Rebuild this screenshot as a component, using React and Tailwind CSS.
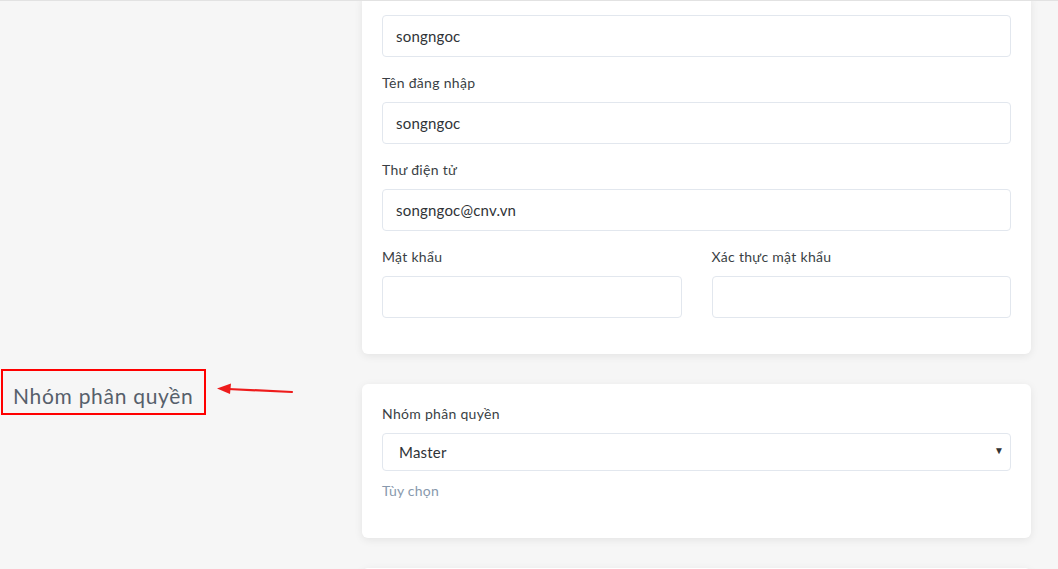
import React from 'react';

function Field({ label, value, className = '' }) {
  return (
    <div className={`mb-4 ${className}`}>
      {label && (
        <label className="block text-[14px] leading-5 tracking-[0.3px] text-[#3a3f45] mb-[9px]">{label}</label>
      )}
      <input
        type="text"
        defaultValue={value}
        className="w-full h-[42px] px-[13px] bg-white border border-[#e2e7ee] rounded-[4px] text-[15px] tracking-[0.2px] text-[#2f3337] outline-none"
      />
    </div>
  );
}

export default function App() {
  return (
    <div
      className="w-full h-[569px] overflow-hidden bg-[#f6f6f6] border-t border-[#e2e2e2] relative"
      style={{ fontFamily: 'Lato, "Open Sans", sans-serif' }}
    >
      <div className="-mt-[6px] flex flex-col gap-[30px]">
        {/* row 1 */}
        <div className="flex">
          <div className="w-[362px] shrink-0" />
          <div className="w-[669px] bg-white rounded-[6px] shadow-[0_2px_8px_rgba(0,0,0,0.08)] px-5 pt-5 pb-5">
            <Field value="songngoc" />
            <Field label="Tên đăng nhập" value="songngoc" />
            <Field label="Thư điện tử" value="songngoc@cnv.vn" />
            <div className="grid grid-cols-2 gap-[30px]">
              <Field label="Mật khẩu" value="" />
              <Field label="Xác thực mật khẩu" value="" />
            </div>
          </div>
        </div>

        {/* row 2 */}
        <div className="flex">
          <div className="w-[362px] shrink-0 relative">
            <div className="-mt-[15px] ml-px w-[205px] h-[46px] border-2 border-[#ff0000] flex items-center pl-[10px]">
              <span className="text-[21px] text-[#56606b] tracking-[0.7px] pt-[7px]">Nhóm phân quyền</span>
            </div>
            <svg className="absolute left-[214px] top-[-2px]" width="82" height="16" viewBox="0 0 82 16">
              <line x1="14" y1="7" x2="78" y2="10" stroke="#ee1c1c" strokeWidth="2.2" strokeLinecap="round" />
              <polygon points="3,6.5 17,1.5 16,12" fill="#ee1c1c" />
            </svg>
          </div>
          <div className="w-[669px] bg-white rounded-[6px] shadow-[0_2px_8px_rgba(0,0,0,0.08)] px-5 pt-5 pb-[37px]">
            <label className="block text-[14px] leading-5 tracking-[0.3px] text-[#3a3f45] mb-[9px]">Nhóm phân quyền</label>
            <div className="relative h-[38px] border border-[#e2e7ee] rounded-[4px] flex items-center pl-4">
              <span className="text-[15px] tracking-[0.2px] text-[#2f3337] pt-px">Master</span>
              <span className="absolute right-[6px] top-[9px] text-[10px] text-[#333]">▼</span>
            </div>
            <div className="mt-[10px] text-[14px] leading-5 tracking-[0.2px] text-[#8899ad]">Tùy chọn</div>
          </div>
        </div>

        {/* row 3 */}
        <div className="flex">
          <div className="w-[362px] shrink-0" />
          <div className="w-[669px] h-[100px] bg-white rounded-[6px] shadow-[0_2px_8px_rgba(0,0,0,0.08)]" />
        </div>
      </div>
    </div>
  );
}
